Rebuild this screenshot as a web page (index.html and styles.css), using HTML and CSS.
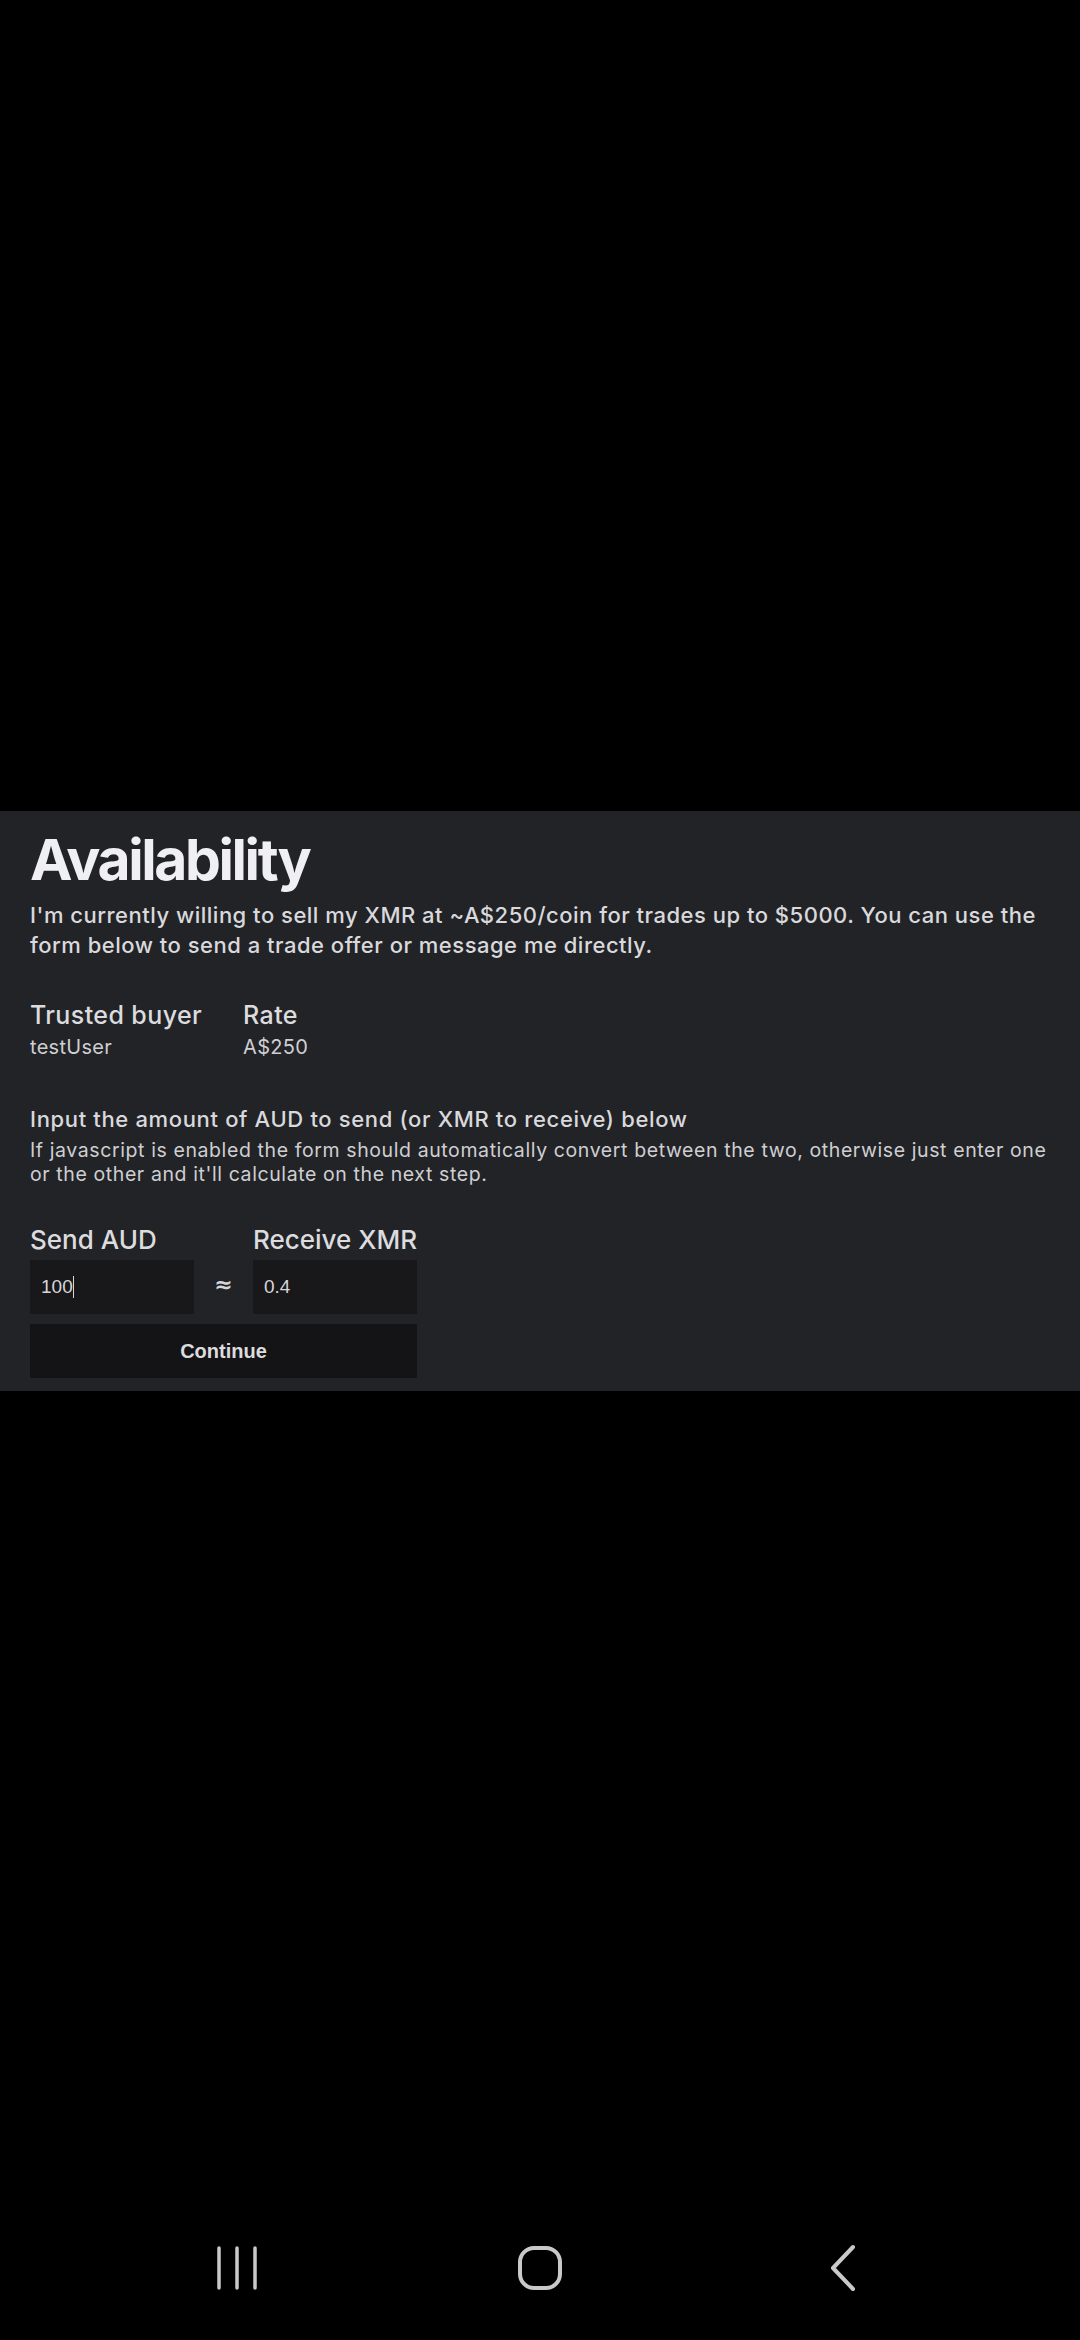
FILE: index.html
```html
<!DOCTYPE html>
<html lang="en">
<head>
  <meta charset="UTF-8">
  <meta name="viewport" content="width=device-width, initial-scale=1.0">
  <title>Availability</title>
  <link rel="stylesheet" href="styles.css">
</head>
<body>

  <section class="panel">
    <h1 class="title">Availability</h1>
    <p class="intro">I'm currently willing to sell my XMR at ~A$250/coin for trades up to $5000. You can use the form below to send a trade offer or message me directly.</p>

    <div class="facts">
      <div class="fact">
        <div class="fact-label">Trusted buyer</div>
        <div class="fact-value">testUser</div>
      </div>
      <div class="fact">
        <div class="fact-label">Rate</div>
        <div class="fact-value">A$250</div>
      </div>
    </div>

    <h2 class="form-title">Input the amount of AUD to send (or XMR to receive) below</h2>
    <p class="form-note">If javascript is enabled the form should automatically convert between the two, otherwise just enter one or the other and it'll calculate on the next step.</p>

    <form class="trade-form">
      <div class="fields">
        <label class="field">
          <span class="field-label">Send AUD</span>
          <span class="field-box">100<span class="caret"></span></span>
        </label>
        <span class="approx">&#8776;</span>
        <label class="field">
          <span class="field-label">Receive XMR</span>
          <span class="field-box">0.4</span>
        </label>
      </div>
      <button type="button" class="continue">Continue</button>
    </form>
  </section>

  <!-- Android navigation bar -->
  <nav class="navbar">
    <div class="nav-item">
      <svg width="42" height="44" viewBox="0 0 42 44">
        <path d="M3 2v40M21 2v40M39 2v40" stroke="#c9c9c9" stroke-width="3.5" stroke-linecap="round" fill="none"/>
      </svg>
    </div>
    <div class="nav-item">
      <svg width="46" height="46" viewBox="0 0 46 46">
        <rect x="3" y="3" width="40" height="40" rx="14" stroke="#c9c9c9" stroke-width="4" fill="none"/>
      </svg>
    </div>
    <div class="nav-item">
      <svg width="28" height="48" viewBox="0 0 28 48">
        <path d="M24 3L4 24l20 21" stroke="#c9c9c9" stroke-width="4" stroke-linecap="round" stroke-linejoin="round" fill="none"/>
      </svg>
    </div>
  </nav>

</body>
</html>
```

FILE: styles.css
```css
body {
  margin: 0;
  background-color: #000;
  font-family: 'Inter', 'Noto Sans', sans-serif;
  color: #e6e6e8;
  min-height: 2340px;
  display: flex;
  flex-direction: column;
}

.panel {
  margin-top: 811px;
  background-color: #222327;
  padding: 14px 30px 13px 30px;
}

.title {
  margin: 0;
  font-size: 57px;
  font-weight: 700;
  line-height: 70px;
  color: #f0f0f2;
  letter-spacing: -2.4px;
}

.intro {
  margin: 5px 0 0;
  font-size: 22px;
  font-weight: 500;
  line-height: 30px;
  letter-spacing: 0.5px;
  color: #d9d9dc;
}

.facts {
  display: flex;
  gap: 41px;
  margin-top: 38px;
}

.fact-label {
  font-size: 25px;
  font-weight: 500;
  line-height: 34px;
  letter-spacing: 0.4px;
  color: #dcdcdf;
}

.fact-value {
  font-size: 20px;
  line-height: 30px;
  letter-spacing: 0.3px;
  color: #cfcfd2;
}

.form-title {
  margin: 42px 0 0;
  font-size: 22px;
  font-weight: 500;
  line-height: 30px;
  letter-spacing: 0.65px;
  color: #d9d9dc;
}

.form-note {
  margin: 4px 0 0;
  font-size: 19.5px;
  line-height: 24px;
  letter-spacing: 0.6px;
  color: #cfcfd2;
}

.trade-form {
  margin-top: 37px;
  width: 387px;
}

.fields {
  display: flex;
  align-items: flex-end;
}

.field {
  display: flex;
  flex-direction: column;
  width: 164px;
}

.field-label {
  font-size: 26px;
  font-weight: 500;
  line-height: 34px;
  color: #dcdcdf;
  white-space: nowrap;
}

.field-box {
  display: flex;
  align-items: center;
  height: 54px;
  margin-top: 3px;
  padding: 0 11px;
  background-color: #18181b;
  font-family: 'Liberation Sans', Arial, sans-serif;
  font-size: 19px;
  color: #d6d6d9;
}

.caret {
  display: inline-block;
  width: 1.5px;
  height: 22px;
  background-color: #d6d6d9;
}

.approx {
  width: 59px;
  height: 54px;
  display: flex;
  align-items: center;
  justify-content: center;
  font-family: 'DejaVu Sans', sans-serif;
  font-size: 22px;
  font-weight: 700;
  color: #d6d6d9;
  padding-bottom: 6px;
  box-sizing: border-box;
}

.continue {
  display: block;
  width: 100%;
  height: 54px;
  margin-top: 10px;
  border: none;
  background-color: #141416;
  font-family: 'Liberation Sans', Arial, sans-serif;
  font-size: 20px;
  font-weight: 700;
  color: #dcdcdf;
}

.navbar {
  margin-top: auto;
  height: 140px;
  display: flex;
  justify-content: center;
  align-items: center;
  gap: 183px;
  padding-bottom: 4px;
  box-sizing: border-box;
}

.nav-item {
  width: 120px;
  display: flex;
  justify-content: center;
}
```
